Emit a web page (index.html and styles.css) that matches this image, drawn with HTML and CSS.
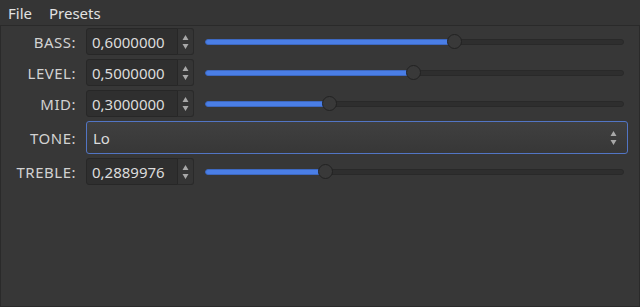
FILE: index.html
```html
<!DOCTYPE html>
<html lang="en">
<head>
  <meta charset="UTF-8" />
  <title>Tone Stack</title>
  <link rel="stylesheet" href="styles.css">
</head>
<body>
  <div class="menubar">
    <span>File</span>
    <span>Presets</span>
  </div>

  <div class="panel">
    <div class="row">
      <label>BASS:</label>
      <div class="spin"><span class="val">0,6000000</span><span class="arrows"><svg width="7" height="16" viewBox="0 0 7 16"><path d="M3.5 1 L6.5 6 L0.5 6 Z M0.5 10 L6.5 10 L3.5 15 Z"/></svg></span></div>
      <div class="slider"><div class="groove"><div class="fill" style="width:60%"></div><div class="knob" style="left:60%"></div></div></div>
    </div>
    <div class="row">
      <label>LEVEL:</label>
      <div class="spin"><span class="val">0,5000000</span><span class="arrows"><svg width="7" height="16" viewBox="0 0 7 16"><path d="M3.5 1 L6.5 6 L0.5 6 Z M0.5 10 L6.5 10 L3.5 15 Z"/></svg></span></div>
      <div class="slider"><div class="groove"><div class="fill" style="width:50%"></div><div class="knob" style="left:50%"></div></div></div>
    </div>
    <div class="row">
      <label>MID:</label>
      <div class="spin"><span class="val">0,3000000</span><span class="arrows"><svg width="7" height="16" viewBox="0 0 7 16"><path d="M3.5 1 L6.5 6 L0.5 6 Z M0.5 10 L6.5 10 L3.5 15 Z"/></svg></span></div>
      <div class="slider"><div class="groove"><div class="fill" style="width:30%"></div><div class="knob" style="left:30%"></div></div></div>
    </div>
    <div class="row combo-row">
      <label>TONE:</label>
      <div class="combo"><span>Lo</span><svg width="7" height="16" viewBox="0 0 7 16"><path d="M3.5 1 L6.5 6 L0.5 6 Z M0.5 10 L6.5 10 L3.5 15 Z"/></svg></div>
    </div>
    <div class="row">
      <label>TREBLE:</label>
      <div class="spin"><span class="val">0,2889976</span><span class="arrows"><svg width="7" height="16" viewBox="0 0 7 16"><path d="M3.5 1 L6.5 6 L0.5 6 Z M0.5 10 L6.5 10 L3.5 15 Z"/></svg></span></div>
      <div class="slider"><div class="groove"><div class="fill" style="width:28.9%"></div><div class="knob" style="left:28.9%"></div></div></div>
    </div>
  </div>
</body>
</html>
```

FILE: styles.css
```css
html, body {
  margin: 0;
  height: 100%;
}
body {
  font-family: 'Noto Sans', sans-serif;
  font-size: 15px;
  background: #373737;
  color: #dcdcdc;
  display: flex;
  flex-direction: column;
}
.menubar {
  height: 25px;
  display: flex;
  align-items: center;
  gap: 17px;
  padding-left: 8px;
  background: #353535;
  color: #e2e2e2;
  box-sizing: border-box;
}
.panel {
  flex: 1;
  border: 1px solid #2a2a2a;
  padding: 2px 0 0 0;
  display: flex;
  flex-direction: column;
  gap: 4px;
}
.row {
  display: flex;
  align-items: center;
  height: 27px;
}
.combo-row {
  height: 33px;
}
.row label {
  width: 75px;
  text-align: right;
  margin-right: 10px;
  letter-spacing: 0.5px;
  color: #d2d2d2;
}
.spin {
  display: flex;
  height: 27px;
  box-sizing: border-box;
}
.spin .val {
  width: 92px;
  box-sizing: border-box;
  padding-left: 5px;
  display: flex;
  align-items: center;
  background: #2f2f2f;
  border: 1px solid #272727;
  border-radius: 3px 0 0 3px;
}
.spin .arrows {
  width: 16px;
  box-sizing: border-box;
  display: flex;
  align-items: center;
  justify-content: center;
  background: #353535;
  border: 1px solid #2a2a2a;
  border-left: none;
  border-radius: 0 3px 3px 0;
}
svg path {
  fill: #a8a8a8;
}
.slider {
  flex: 1;
  padding: 0 9px 0 11px;
}
.groove {
  position: relative;
  height: 6px;
  box-sizing: border-box;
  background: #2e2e2e;
  border: 1px solid #292929;
  border-radius: 3px;
  margin-right: 6px;
}
.fill {
  height: 6px;
  margin-top: -1px;
  margin-left: -1px;
  background: #4a7ee6;
  border-radius: 3px;
  box-sizing: border-box;
  border: 1px solid #3d68c0;
}
.knob {
  position: absolute;
  top: 50%;
  width: 15px;
  height: 15px;
  margin: -8px 0 0 -9px;
  border-radius: 50%;
  background: #393939;
  border: 1px solid #222222;
  box-sizing: border-box;
}
.combo {
  width: 542px;
  height: 33px;
  box-sizing: border-box;
  border: 1px solid #5275c4;
  border-radius: 3px;
  background: linear-gradient(#404040, #373737);
  display: flex;
  align-items: center;
  justify-content: space-between;
  padding: 0 10px 0 6px;
}
```
